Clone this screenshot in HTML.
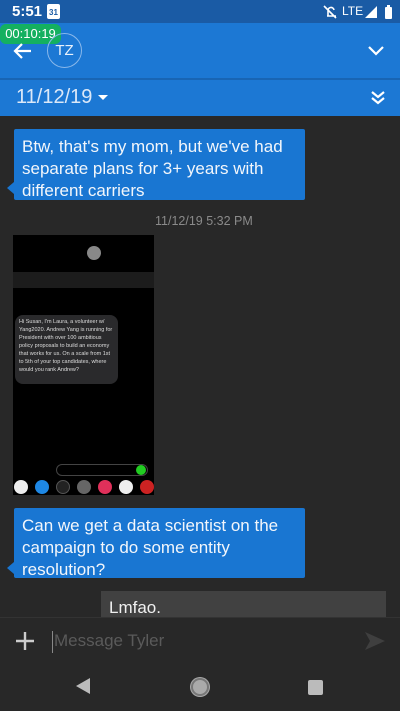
<!DOCTYPE html>
<html><head><meta charset="utf-8"><style>
*{margin:0;padding:0;box-sizing:border-box}
body{width:400px;height:711px;overflow:hidden;background:#282828;font-family:"Liberation Sans",sans-serif;position:relative}
.abs{position:absolute}
.bub{position:absolute;background:#1976d2;color:#f2f6fb;font-size:17px;line-height:22px;padding:7px 8px;border-radius:2px}
.tail{position:absolute;width:0;height:0;border-top:6px solid transparent;border-bottom:6px solid transparent;border-right:7px solid #1976d2}
.ts{position:absolute;color:#8a8a8a;font-size:12.5px}
.ic{position:absolute;top:480px;width:14px;height:14px;border-radius:50%}
</style></head><body>
<div class="abs" style="left:0;top:0;width:400px;height:23px;background:#1a5ba5"></div>
<div class="abs" style="left:12px;top:3px;color:#fff;font-size:15px;font-weight:bold">5:51</div>
<div class="abs" style="left:47px;top:4px;width:13px;height:15px;background:#fff;border-radius:2px;color:#1a5ba5;font-size:8px;font-weight:bold;text-align:center;line-height:17px">31</div>
<div class="abs" style="left:342px;top:4px;color:#fff;font-size:12px">LTE</div>
<svg class="abs" style="left:322px;top:4px" width="78" height="16"><path d="M2 2l12 12M5 12h9M6 12V7a3 3 0 016-1" stroke="#fff" stroke-width="1.6" fill="none"/><path d="M43 14L55 2v12z" fill="#fff"/><rect x="63" y="3" width="7" height="12" rx="1" fill="#fff"/><rect x="65" y="1" width="3" height="2" fill="#fff"/></svg>
<div class="abs" style="left:0;top:23px;width:400px;height:55px;background:#1c78d4"></div>
<div class="abs" style="left:0;top:24px;width:61px;height:20px;background:#14b060;border-radius:6px;color:#fff;font-size:13px;line-height:20px;text-align:center">00:10:19</div>
<svg class="abs" style="left:12px;top:40px" width="22" height="22"><path d="M19 11H4M10 4l-7 7 7 7" stroke="#fff" stroke-width="2.2" fill="none"/></svg>
<div class="abs" style="left:47px;top:33px;width:35px;height:35px;border:1px solid #8ab8ea;border-radius:50%;color:#e8f1fb;font-size:15px;text-align:center;line-height:33px">TZ</div>
<svg class="abs" style="left:367px;top:43px" width="18" height="14"><path d="M2 4l7 7 7-7" stroke="#fff" stroke-width="2.2" fill="none"/></svg>
<div class="abs" style="left:0;top:78px;width:400px;height:2px;background:#1865b4"></div>
<div class="abs" style="left:0;top:80px;width:400px;height:36px;background:#1c78d4"></div>
<div class="abs" style="left:16px;top:86px;color:#dbe8f8;font-size:20px">11/12/19</div>
<div class="abs" style="left:98px;top:95px;width:0;height:0;border-left:5px solid transparent;border-right:5px solid transparent;border-top:5px solid #fff"></div>
<svg class="abs" style="left:370px;top:89px" width="16" height="18"><path d="M2 3l6 5 6-5M2 9l6 5 6-5" stroke="#fff" stroke-width="2.2" fill="none"/></svg>
<div class="bub" style="left:14px;top:129px;width:291px;height:71px">Btw, that's my mom, but we've had separate plans for 3+ years with different carriers</div>
<div class="tail" style="left:7px;top:182px"></div>
<div class="ts" style="left:155px;top:214px">11/12/19 5:32 PM</div>
<div class="abs" style="left:13px;top:235px;width:141px;height:260px;background:#000"></div>
<div class="abs" style="left:13px;top:272px;width:141px;height:16px;background:#1c1c1c"></div>
<div class="abs" style="left:87px;top:246px;width:14px;height:14px;border-radius:50%;background:#888"></div>
<div class="abs" style="left:15px;top:315px;width:103px;height:69px;background:#2a2a2c;border-radius:8px;color:#ddd;font-size:5.5px;line-height:8px;padding:3px 4px">Hi Susan, I'm Laura, a volunteer w/ Yang2020. Andrew Yang is running for President with over 100 ambitious policy proposals to build an economy that works for us. On a scale from 1st to 5th of your top candidates, where would you rank Andrew?</div>
<div class="abs" style="left:56px;top:464px;width:92px;height:12px;border:1px solid #444;border-radius:6px"></div>
<div class="abs" style="left:136px;top:465px;width:10px;height:10px;border-radius:50%;background:#2c2"></div>
<div class="ic" style="left:14px;background:#eee"></div>
<div class="ic" style="left:35px;background:#1e88e5"></div>
<div class="ic" style="left:56px;background:#222;border:1px solid #555"></div>
<div class="ic" style="left:77px;background:#666"></div>
<div class="ic" style="left:98px;background:#e0305a"></div>
<div class="ic" style="left:119px;background:#eee"></div>
<div class="ic" style="left:140px;background:#c22"></div>
<div class="bub" style="left:14px;top:508px;width:291px;height:70px">Can we get a data scientist on the campaign to do some entity resolution?</div>
<div class="tail" style="left:7px;top:562px"></div>
<div class="abs" style="left:101px;top:591px;width:285px;height:30px;background:#414141;color:#f0f0f0;font-size:17px;padding:7px 8px">Lmfao.</div>
<div class="abs" style="left:0;top:617px;width:400px;height:94px;background:#282828;border-top:1px solid #333"></div>
<svg class="abs" style="left:14px;top:630px" width="22" height="22"><path d="M11 2v18M2 11h18" stroke="#ccc" stroke-width="2.4"/></svg>
<div class="abs" style="left:52px;top:631px;width:1px;height:22px;background:#888"></div>
<div class="abs" style="left:54px;top:631px;color:#5a5a5a;font-size:17px">Message Tyler</div>
<svg class="abs" style="left:364px;top:631px" width="22" height="20"><path d="M1 1l20 9-20 9 5-9z" fill="#3f3f3f"/></svg>
<svg class="abs" style="left:75px;top:677px" width="16" height="18"><path d="M15 1v16L1 9z" fill="#bbb"/></svg>
<div class="abs" style="left:191px;top:678px;width:18px;height:18px;border-radius:50%;background:#aaa;border:2px solid #777;box-shadow:0 0 0 1px #aaa"></div>
<div class="abs" style="left:308px;top:680px;width:15px;height:15px;background:#bbb;border-radius:2px"></div>
</body></html>
